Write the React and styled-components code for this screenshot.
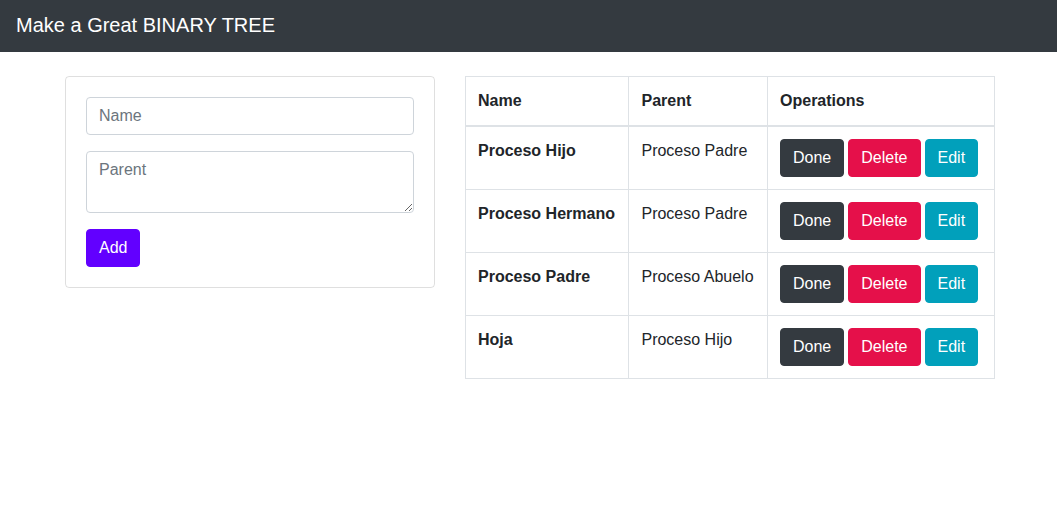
import React from "react";
import styled, { createGlobalStyle } from "styled-components";

const Global = createGlobalStyle`
  *, *::before, *::after { box-sizing: border-box; }
  body {
    margin: 0;
    font-family: "Liberation Sans", Arial, sans-serif;
    font-size: 16px;
    line-height: 1.5;
    color: #212529;
    background: #fff;
  }
`;

const Navbar = styled.nav`
  height: 52px;
  background: #343a40;
  padding: 10px 16px 0;
`;

const Brand = styled.span`
  color: #fff;
  font-size: 20px;
  line-height: 30px;
`;

const Container = styled.main`
  width: 930px;
  margin: 24px auto 0;
  padding-left: 1.5px;
  display: grid;
  grid-template-columns: 370px 530px;
  column-gap: 30px;
  align-items: start;
`;

const Card = styled.div`
  border: 1px solid rgba(0, 0, 0, 0.125);
  border-radius: 4px;
  padding: 20px;
  display: flex;
  flex-direction: column;
  gap: 16px;
  align-items: flex-start;
`;

const fieldCss = `
  width: 100%;
  display: block;
  font-family: inherit;
  font-size: 16px;
  line-height: 24px;
  color: #495057;
  padding: 6px 12px;
  border: 1px solid #ced4da;
  border-radius: 4px;
  background: #fff;
  margin: 0;
  &::placeholder { color: #6c757d; opacity: 1; }
`;

const Input = styled.input`
  ${fieldCss}
  height: 38px;
`;

const TextArea = styled.textarea`
  ${fieldCss}
  height: 62px;
  resize: vertical;
`;

const Button = styled.button`
  font-family: inherit;
  font-size: 16px;
  line-height: 24px;
  padding: 6px 12px;
  border: 1px solid ${(p) => p.$bg};
  border-radius: 4px;
  background: ${(p) => p.$bg};
  color: #fff;
  cursor: pointer;
  margin: 0;
`;

const Table = styled.table`
  width: 530px;
  border-collapse: collapse;
  border: 1px solid #dee2e6;
`;

const Th = styled.th`
  text-align: left;
  font-weight: 700;
  padding: 12px;
  border: 1px solid #dee2e6;
  border-bottom-width: 2px;
  vertical-align: bottom;
  width: ${(p) => p.$w}px;
`;

const Td = styled.td`
  padding: 12px;
  border: 1px solid #dee2e6;
  vertical-align: top;
  font-weight: ${(p) => (p.$bold ? 700 : 400)};
`;

const Ops = styled.div`
  display: flex;
  gap: 4px;
`;

const rows = [
  ["Proceso Hijo", "Proceso Padre"],
  ["Proceso Hermano", "Proceso Padre"],
  ["Proceso Padre", "Proceso Abuelo"],
  ["Hoja", "Proceso Hijo"],
];

export default function App() {
  return (
    <>
      <Global />
      <Navbar>
        <Brand>Make a Great BINARY TREE</Brand>
      </Navbar>
      <Container>
        <Card>
          <Input placeholder="Name" />
          <TextArea placeholder="Parent" />
          <Button $bg="#6200ff">Add</Button>
        </Card>
        <Table>
          <thead>
            <tr>
              <Th $w={164}>Name</Th>
              <Th $w={139}>Parent</Th>
              <Th $w={227}>Operations</Th>
            </tr>
          </thead>
          <tbody>
            {rows.map(([name, parent]) => (
              <tr key={name}>
                <Td $bold>{name}</Td>
                <Td>{parent}</Td>
                <Td>
                  <Ops>
                    <Button $bg="#343a40">Done</Button>
                    <Button $bg="#e5104a">Delete</Button>
                    <Button $bg="#01a0bb">Edit</Button>
                  </Ops>
                </Td>
              </tr>
            ))}
          </tbody>
        </Table>
      </Container>
    </>
  );
}
